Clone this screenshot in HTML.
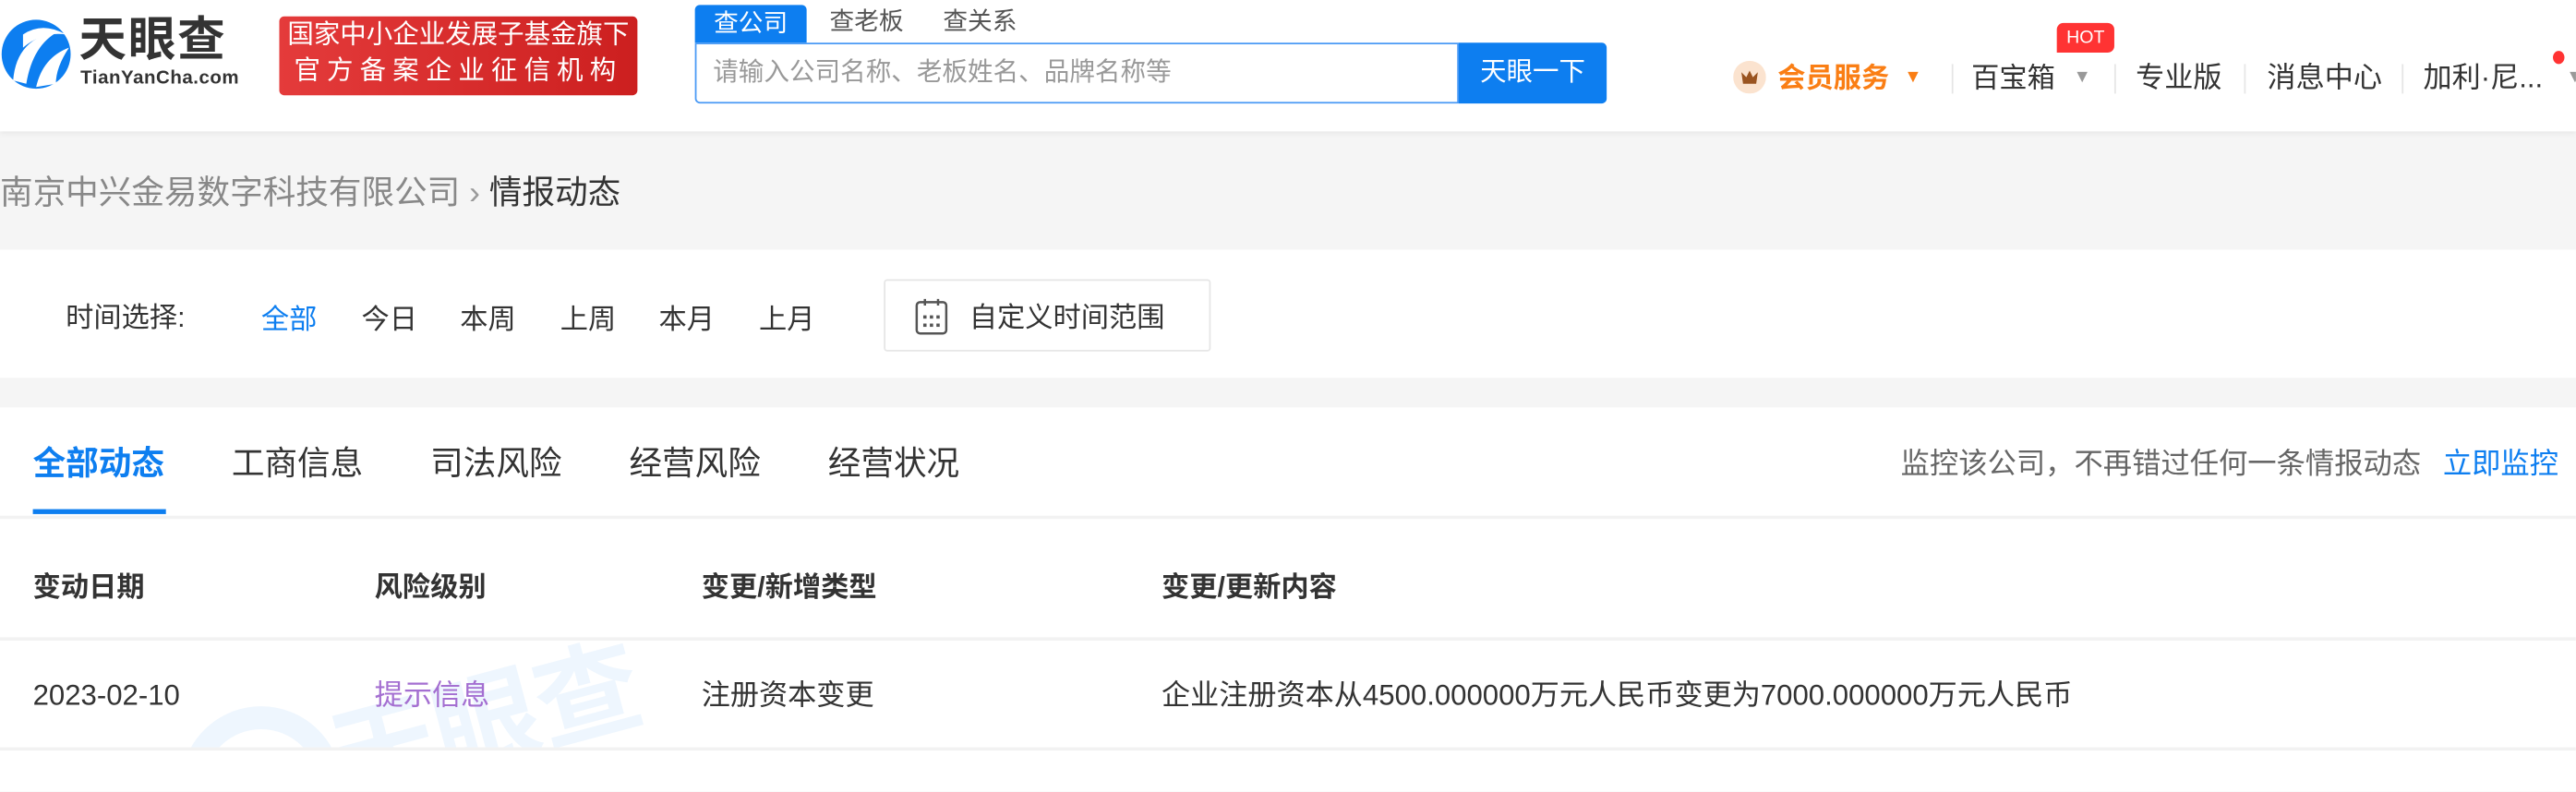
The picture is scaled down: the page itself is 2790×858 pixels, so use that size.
<!DOCTYPE html>
<html><head><meta charset="utf-8"><style>
html,body{margin:0;padding:0;width:2790px;height:858px;overflow:hidden;background:#f5f5f5}
#w{position:absolute;left:0;top:0;width:1568px;height:482px;overflow:hidden;transform:scale(1.7793);transform-origin:0 0;font-family:"Liberation Sans","Noto Sans CJK SC",sans-serif;color:#333}
.a{position:absolute;white-space:nowrap;line-height:1}
</style></head><body><div id="w">
<div class="a" style="left:0;top:0;width:1568px;height:80px;background:#fff;box-shadow:0 1px 4px rgba(0,0,0,.08)"></div>
<svg class="a" style="left:0;top:9px" width="44" height="48" viewBox="0 0 44 48"><circle cx="22" cy="24" r="21" fill="#0d7ef0"/><path d="M8 40 Q10 14 36 10 Q20 18 16 42Z" fill="#fff"/><path d="M22 44 Q26 26 42 20 Q34 32 34 42Z" fill="#fff"/><path d="M14 12 Q26 4 40 12 Q26 10 14 20Z" fill="#fff"/></svg>
<div class="a" style="left:48px;top:11px;font-size:29px;font-weight:bold;color:#333;letter-spacing:1px">天眼查</div>
<div class="a" style="left:49px;top:43px;font-size:11.5px;font-weight:bold;color:#333;letter-spacing:.3px">TianYanCha.com</div>
<div class="a" style="left:170px;top:10px;width:218px;height:47px;background:linear-gradient(90deg,#e43b3b,#cc1f1f);border-radius:3px;color:#fff;font-size:16px;text-align:center;line-height:22px;padding-top:1px"><div>国家中小企业发展子基金旗下</div><div style="letter-spacing:4px">官方备案企业征信机构</div></div>
<div class="a" style="left:423px;top:3px;width:68px;height:23px;background:#0d7ef0;color:#fff;font-size:15px;text-align:center;line-height:23px;border-radius:3px 3px 0 0">查公司</div>
<div class="a" style="left:505px;top:6px;font-size:15px;color:#555">查老板</div>
<div class="a" style="left:574px;top:6px;font-size:15px;color:#555">查关系</div>
<div class="a" style="left:423px;top:26px;width:463px;height:35px;border:1px solid #4a9af5;border-radius:0 0 0 3px;background:#fff"></div>
<div class="a" style="left:434px;top:37px;font-size:15.5px;color:#999">请输入公司名称、老板姓名、品牌名称等</div>
<div class="a" style="left:888px;top:26px;width:90px;height:37px;background:#0d7ef0;color:#fff;font-size:16px;text-align:center;line-height:37px;border-radius:0 3px 3px 0">天眼一下</div>
<svg class="a" style="left:1055px;top:37px" width="20" height="20"><circle cx="10" cy="10" r="10" fill="#fbe3cf"/><path d="M5 7 L8 10 L10 6 L12 10 L15 7 L14 14 H6Z" fill="#9a5420"/></svg>
<div class="a" style="left:1082px;top:39px;font-size:17px;font-weight:bold;color:#fa7e14">会员服务</div>
<div class="a" style="left:1159px;top:42px;font-size:11px;color:#fa7e14">▼</div>
<div class="a" style="left:1188px;top:39px;width:1px;height:18px;background:#e6e6e6"></div>
<div class="a" style="left:1200px;top:39px;font-size:17px">百宝箱</div>
<div class="a" style="left:1262px;top:42px;font-size:11px;color:#999">▼</div>
<div class="a" style="left:1252px;top:14px;width:35px;height:18px;background:#f33;border-radius:4px 4px 4px 0;color:#fff;font-size:11px;text-align:center;line-height:18px">HOT</div>
<div class="a" style="left:1287px;top:39px;width:1px;height:18px;background:#e6e6e6"></div>
<div class="a" style="left:1300px;top:39px;font-size:17.5px">专业版</div>
<div class="a" style="left:1366px;top:39px;width:1px;height:18px;background:#e6e6e6"></div>
<div class="a" style="left:1380px;top:39px;font-size:17.5px">消息中心</div>
<div class="a" style="left:1462px;top:39px;width:1px;height:18px;background:#e6e6e6"></div>
<div class="a" style="left:1475px;top:39px;font-size:17.5px">加利·尼...</div>
<div class="a" style="left:1554px;top:31px;width:7px;height:8px;border-radius:50%;background:#f33"></div>
<div class="a" style="left:1562px;top:42px;font-size:11px;color:#999">▼</div>
<div class="a" style="left:0;top:108px;font-size:20px;color:#888">南京中兴金易数字科技有限公司 <span style="color:#999">›</span> <span style="color:#333">情报动态</span></div>
<div class="a" style="left:0;top:152px;width:1568px;height:78px;background:#fff"></div>
<div class="a" style="left:40px;top:185px;font-size:17px">时间选择:</div>
<div class="a" style="left:159px;top:186px;font-size:17px;color:#0d7ef0">全部</div>
<div class="a" style="left:220px;top:186px;font-size:17px">今日</div>
<div class="a" style="left:280px;top:186px;font-size:17px">本周</div>
<div class="a" style="left:341px;top:186px;font-size:17px">上周</div>
<div class="a" style="left:401px;top:186px;font-size:17px">本月</div>
<div class="a" style="left:462px;top:186px;font-size:17px">上月</div>
<div class="a" style="left:538px;top:170px;width:197px;height:42px;border:1px solid #e6e6e6;border-radius:2px"></div>
<svg class="a" style="left:556px;top:181px" width="22" height="24"><rect x="2" y="3" width="18" height="19" rx="2" fill="none" stroke="#555" stroke-width="1.4"/><line x1="7" y1="1" x2="7" y2="5" stroke="#555" stroke-width="1.4"/><line x1="15" y1="1" x2="15" y2="5" stroke="#555" stroke-width="1.4"/><g fill="#555"><rect x="6" y="11" width="2" height="2"/><rect x="10" y="11" width="2" height="2"/><rect x="14" y="11" width="2" height="2"/><rect x="6" y="16" width="2" height="2"/><rect x="10" y="16" width="2" height="2"/><rect x="14" y="16" width="2" height="2"/></g></svg>
<div class="a" style="left:590px;top:185px;font-size:17px">自定义时间范围</div>
<div class="a" style="left:0;top:248px;width:1568px;height:240px;background:#fff"></div>
<div class="a" style="left:20px;top:273px;font-size:20px;font-weight:bold;color:#0d7ef0">全部动态</div>
<div class="a" style="left:141px;top:273px;font-size:20px">工商信息</div>
<div class="a" style="left:262px;top:273px;font-size:20px">司法风险</div>
<div class="a" style="left:383px;top:273px;font-size:20px">经营风险</div>
<div class="a" style="left:504px;top:273px;font-size:20px">经营状况</div>
<div class="a" style="left:20px;top:310px;width:81px;height:3px;background:#0d7ef0"></div>
<div class="a" style="left:1157px;top:274px;font-size:17.6px;color:#666">监控该公司，不再错过任何一条情报动态</div>
<div class="a" style="left:1487px;top:274px;font-size:17.6px;color:#0d7ef0">立即监控</div>
<div class="a" style="left:0;top:314px;width:1568px;height:2px;background:#f2f2f2"></div>
<div class="a" style="left:20px;top:349px;font-size:17px;font-weight:bold">变动日期</div>
<div class="a" style="left:228px;top:349px;font-size:17px;font-weight:bold">风险级别</div>
<div class="a" style="left:427px;top:349px;font-size:17px;font-weight:bold">变更/新增类型</div>
<div class="a" style="left:707px;top:349px;font-size:17px;font-weight:bold">变更/更新内容</div>
<div class="a" style="left:0;top:388px;width:1568px;height:2px;background:#f2f2f2"></div>
<div class="a" style="left:0;top:390px;width:1568px;height:65px;overflow:hidden">
<div class="a" style="left:200px;top:18px;font-size:64px;font-weight:bold;color:#eef6fe;transform:rotate(-15deg)">天眼查</div>
<div class="a" style="left:110px;top:40px;width:70px;height:70px;border-radius:50%;border:14px solid #eef6fe"></div>
</div>
<div class="a" style="left:20px;top:415px;font-size:17.5px">2023-02-10</div>
<div class="a" style="left:228px;top:415px;font-size:17.5px;color:#a46fd1">提示信息</div>
<div class="a" style="left:427px;top:415px;font-size:17.5px">注册资本变更</div>
<div class="a" style="left:707px;top:415px;font-size:17.5px">企业注册资本从4500.000000万元人民币变更为7000.000000万元人民币</div>
<div class="a" style="left:0;top:455px;width:1568px;height:2px;background:#f2f2f2"></div>
</div></body></html>
